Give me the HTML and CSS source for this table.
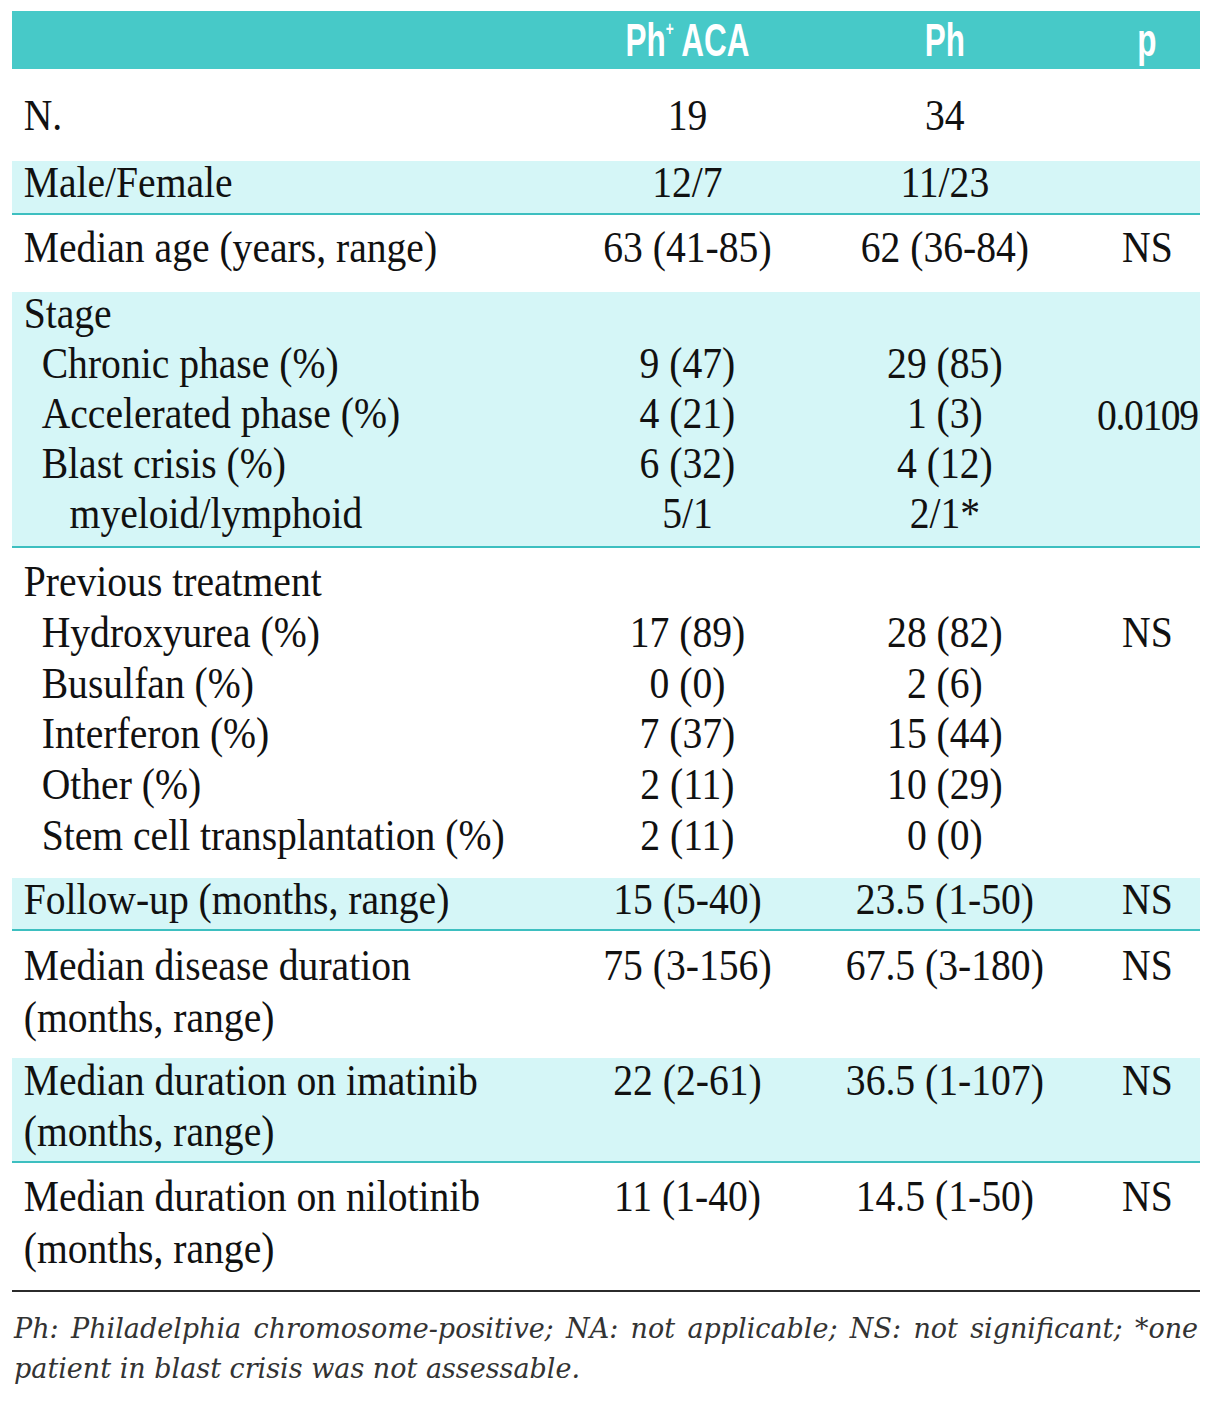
FILE: index.html
```html
<!DOCTYPE html>
<html lang="en">
<head>
<meta charset="utf-8">
<title>Patient characteristics</title>
<link rel="stylesheet" href="styles.css">
</head>
<body>
<div class="page">
  <div class="table">
    <div class="row hd">
      <div class="c lab"></div>
      <div class="c num"><span class="hdt">Ph<sup>+</sup> ACA</span></div>
      <div class="c num"><span class="hdt">Ph</span></div>
      <div class="c pv"><span class="hdt">p</span></div>
    </div>

    <div class="row r1">
      <div class="c lab">N.</div>
      <div class="c num">19</div>
      <div class="c num">34</div>
      <div class="c pv"></div>
    </div>

    <div class="row band r2">
      <div class="c lab">Male/Female</div>
      <div class="c num">12/7</div>
      <div class="c num">11/23</div>
      <div class="c pv"></div>
    </div>

    <div class="row r3">
      <div class="c lab">Median age (years, range)</div>
      <div class="c num">63 (41-85)</div>
      <div class="c num">62 (36-84)</div>
      <div class="c pv">NS</div>
    </div>

    <div class="row band r4 up">
      <div class="c lab">Stage<br><span class="i1">Chronic phase (%)</span><br><span class="i1">Accelerated phase (%)</span><br><span class="i1">Blast crisis (%)</span><br><span class="i2">myeloid/lymphoid</span></div>
      <div class="c num"><br>9 (47)<br>4 (21)<br>6 (32)<br>5/1</div>
      <div class="c num"><br>29 (85)<br>1 (3)<br>4 (12)<br>2/1*</div>
      <div class="c pv mid">0.0109</div>
    </div>

    <div class="row r5">
      <div class="c lab">Previous treatment<br><span class="i1">Hydroxyurea (%)</span><br><span class="i1">Busulfan (%)</span><br><span class="i1">Interferon (%)</span><br><span class="i1">Other (%)</span><br><span class="i1">Stem cell transplantation (%)</span></div>
      <div class="c num"><br>17 (89)<br>0 (0)<br>7 (37)<br>2 (11)<br>2 (11)</div>
      <div class="c num"><br>28 (82)<br>2 (6)<br>15 (44)<br>10 (29)<br>0 (0)</div>
      <div class="c pv"><br>NS</div>
    </div>

    <div class="row band r6">
      <div class="c lab">Follow-up (months, range)</div>
      <div class="c num">15 (5-40)</div>
      <div class="c num">23.5 (1-50)</div>
      <div class="c pv">NS</div>
    </div>

    <div class="row r7">
      <div class="c lab">Median disease duration<br>(months, range)</div>
      <div class="c num">75 (3-156)</div>
      <div class="c num">67.5 (3-180)</div>
      <div class="c pv">NS</div>
    </div>

    <div class="row band r8 up">
      <div class="c lab">Median duration on imatinib<br>(months, range)</div>
      <div class="c num">22 (2-61)</div>
      <div class="c num">36.5 (1-107)</div>
      <div class="c pv">NS</div>
    </div>

    <div class="row r9">
      <div class="c lab">Median duration on nilotinib<br>(months, range)</div>
      <div class="c num">11 (1-40)</div>
      <div class="c num">14.5 (1-50)</div>
      <div class="c pv">NS</div>
    </div>
  </div>

  <div class="note">
    <p class="note-l1">Ph: Philadelphia chromosome-positive; NA: not applicable; NS: not significant; *one</p>
    <p class="note-l2">patient in blast crisis was not assessable.</p>
  </div>
</div>
</body>
</html>
```

FILE: styles.css
```css
html, body {
  margin: 0;
  padding: 0;
  background: #ffffff;
}

body {
  overflow-x: hidden;
}

.page {
  padding: 11px 9px 0 12px;
}

/* The table face is a condensed serif: the table is set in
   Liberation Serif and condensed horizontally. */
.table {
  width: 1320px;
  transform: scaleX(0.9);
  transform-origin: 0 0;
  font-family: "Liberation Serif", "Times New Roman", serif;
  font-size: 44px;
  color: #111111;
}

.row {
  display: grid;
  grid-template-columns: 609px 283px 289px 139px;
  line-height: 50px;
}

.c {
  white-space: nowrap;
}

.lab {
  padding-left: 13px;
}

.num {
  text-align: center;
}

.pv {
  text-align: center;
  padding-left: 22px;
}

.mid {
  align-self: center;
  letter-spacing: -1.5px;
}

.i1 {
  padding-left: 20px;
}

.i2 {
  padding-left: 51px;
}

.band {
  background: #d5f6f7;
  border-bottom: 2px solid #3dbfc0;
}

.up > .c {
  margin-top: -3px;
}

.up > .mid {
  margin-top: 0;
}

/* header */
.hd {
  height: 58px;
  background: #47c9c8;
  align-items: center;
  font-family: "Liberation Sans", Arial, sans-serif;
  font-weight: bold;
  font-size: 46px;
  color: #ffffff;
  line-height: 58px;
}

.hdt {
  display: inline-block;
  transform: scaleX(0.76);
  transform-origin: 50% 50%;
}

.hdt sup {
  font-size: 20px;
  vertical-align: 20px;
  line-height: 0;
}

.r1 {
  padding: 22px 0 20px;
}

.r2 {
  line-height: 44px;
  padding: 0 0 8px;
}

.r3 {
  padding: 8px 0 19px;
}

.r4 {
  padding: 0 0 7px;
}

.r5 {
  line-height: 50.75px;
  padding: 9px 0 16.5px;
}

.r6 {
  line-height: 44px;
  padding: 0 0 7px;
}

.r7 {
  line-height: 51.5px;
  padding: 9px 0 15px;
}

.r8 {
  line-height: 51px;
  padding: 0 0 4px;
}

.r9 {
  line-height: 52px;
  padding: 8px 0 15px;
  border-bottom: 2px solid #2b2b2b;
}

/* footnote */
.note {
  margin-top: 17px;
  padding: 0 2px 0 2px;
  font-family: "DejaVu Serif", "Liberation Serif", serif;
  font-style: italic;
  font-size: 27px;
  line-height: 40px;
  color: #333333;
}

.note p {
  margin: 0;
}

.note-l1 {
  text-align: justify;
  text-align-last: justify;
}
```
